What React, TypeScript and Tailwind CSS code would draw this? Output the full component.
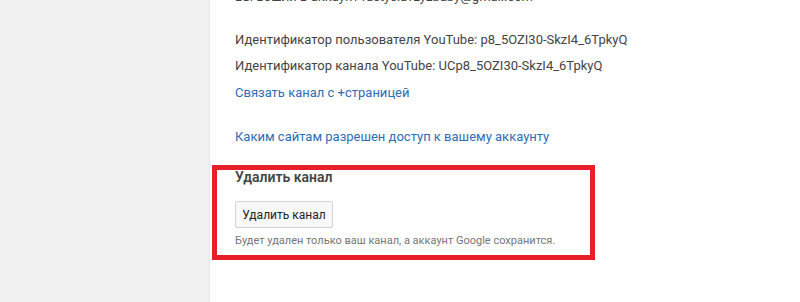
import React from 'react';

const font = { fontFamily: 'Roboto, Arial, sans-serif' };

function InfoLine({ children }: { children: React.ReactNode }) {
    return <p className="text-[13px] leading-[26px] text-[#444]">{children}</p>;
}

function DeleteChannel() {
    return (
        <section className="ml-[-23px] mt-[15px] w-[383px] border-[5px] border-[#e61f2a] pl-[18px] pb-[7px]">
            <h3 className="text-[14px] leading-[14px] font-semibold text-[#444]">Удалить канал</h3>
            <button className="mt-[17px] h-[27px] w-[98px] rounded-[2px] border border-[#d3d3d3] bg-[#f8f8f8] text-[12px] font-normal text-[#222]">
                Удалить канал
            </button>
            <p className="mt-[6px] text-[11px] leading-[14px] text-[#767676]">
                Будет удален только ваш канал, а аккаунт Google сохранится.
            </p>
        </section>
    );
}

export default function App() {
    return (
        <div className="flex h-[302px] w-[800px] overflow-hidden bg-white" style={font}>
            <aside className="h-full w-[210px] shrink-0 border-r border-[#e6e6e6] bg-[#f1f1f1]" />
            <main className="flex-1 pl-[25px]">
                <p className="mt-[-11px] text-[13px] leading-[16px] text-[#444]">
                    Вы вошли в аккаунт rastyslavzyzbaby@gmail.com
                </p>
                <div className="mt-[22px]">
                    <InfoLine>Идентификатор пользователя YouTube: p8_5OZI30-SkzI4_6TpkyQ</InfoLine>
                    <InfoLine>Идентификатор канала YouTube: UCp8_5OZI30-SkzI4_6TpkyQ</InfoLine>
                    <a href="#" className="block pt-px text-[13px] leading-[26px] text-[#2e6db4]">
                        Связать канал с +страницей
                    </a>
                </div>
                <a href="#" className="mt-[18px] block text-[13px] leading-[26px] text-[#2e6db4]">
                    Каким сайтам разрешен доступ к вашему аккаунту
                </a>
                <DeleteChannel />
            </main>
        </div>
    );
}
